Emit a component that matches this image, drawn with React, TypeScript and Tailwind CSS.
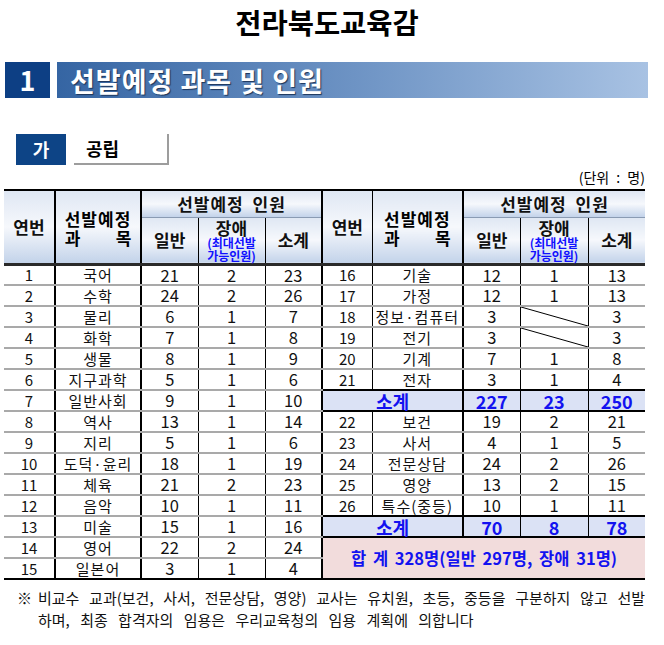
import React from "react";

const FONT = { fontFamily: '"Noto Sans CJK KR", "Noto Sans", sans-serif' };

const left: [number, string, number, number, number][] = [
  [1, "국어", 21, 2, 23],
  [2, "수학", 24, 2, 26],
  [3, "물리", 6, 1, 7],
  [4, "화학", 7, 1, 8],
  [5, "생물", 8, 1, 9],
  [6, "지구과학", 5, 1, 6],
  [7, "일반사회", 9, 1, 10],
  [8, "역사", 13, 1, 14],
  [9, "지리", 5, 1, 6],
  [10, "도덕·윤리", 18, 1, 19],
  [11, "체육", 21, 2, 23],
  [12, "음악", 10, 1, 11],
  [13, "미술", 15, 1, 16],
  [14, "영어", 22, 2, 24],
  [15, "일본어", 3, 1, 4],
];

type R =
  | { k: "row"; n: number; s: string; a: number; b: number | null; c: number }
  | { k: "sub"; a: number; b: number; c: number }
  | { k: "total" }
  | { k: "none" };

const right: R[] = [
  { k: "row", n: 16, s: "기술", a: 12, b: 1, c: 13 },
  { k: "row", n: 17, s: "가정", a: 12, b: 1, c: 13 },
  { k: "row", n: 18, s: "정보·컴퓨터", a: 3, b: null, c: 3 },
  { k: "row", n: 19, s: "전기", a: 3, b: null, c: 3 },
  { k: "row", n: 20, s: "기계", a: 7, b: 1, c: 8 },
  { k: "row", n: 21, s: "전자", a: 3, b: 1, c: 4 },
  { k: "sub", a: 227, b: 23, c: 250 },
  { k: "row", n: 22, s: "보건", a: 19, b: 2, c: 21 },
  { k: "row", n: 23, s: "사서", a: 4, b: 1, c: 5 },
  { k: "row", n: 24, s: "전문상담", a: 24, b: 2, c: 26 },
  { k: "row", n: 25, s: "영양", a: 13, b: 2, c: 15 },
  { k: "row", n: 26, s: "특수(중등)", a: 10, b: 1, c: 11 },
  { k: "sub", a: 70, b: 8, c: 78 },
  { k: "total" },
  { k: "none" },
];

const HG = "bg-linear-to-b from-[#dfe7f3] via-[#f6f8fc] to-[#c3d3ea]";

function Diag() {
  return (
    <svg className="absolute inset-0 h-full w-full" viewBox="0 0 100 100" preserveAspectRatio="none">
      <line x1="0" y1="0" x2="100" y2="100" stroke="#000" strokeWidth="1" vectorEffect="non-scaling-stroke" />
    </svg>
  );
}

function SubjectHead() {
  return (
    <th rowSpan={2} className={`${HG} border-b-[3px] border-b-[#2a2a2a] border-r-2 border-r-black p-0 align-middle`}>
      <div className="inline-flex flex-col text-[17px] font-bold leading-[19px] text-black">
        <span className="tracking-[1px]">선발예정</span>
        <span className="flex justify-between">
          <span>과</span>
          <span>목</span>
        </span>
      </div>
    </th>
  );
}

export default function App() {
  const gray = "border-b-2 border-b-[#a9a9a9]";
  const blk = "border-b-2 border-b-black";
  const cell = "p-0 text-center align-middle";
  const subCls = "bg-[#dbe2f5] text-[18px] font-bold leading-none text-[#1212f0]";
  return (
    <div className="relative h-[645px] w-[664px] overflow-hidden bg-white text-[#111]" style={FONT}>
      {/* title */}
      <div className="flex h-[44px] items-center justify-center pr-[10px]">
        <h1 className="text-[28.5px] font-bold leading-none text-black">전라북도교육감</h1>
      </div>
      {/* section bar */}
      <div className="mt-[18px] flex h-[36px] items-stretch pl-[5px] pr-[16px]">
        <div className="flex w-[45px] items-center justify-center bg-[#0d3f84] text-[27px] font-bold text-white">1</div>
        <div className="ml-[7px] flex flex-1 items-center bg-linear-to-r from-[#3565a3] via-[#6d93c4] to-[#a8c2e3] pl-[13px]">
          <span
            className="text-[27px] font-bold leading-none tracking-[1px] text-white"
            style={{ textShadow: "1px 1px 1px #1c3559" }}
          >
            선발예정 과목 및 인원
          </span>
        </div>
      </div>
      {/* 가 공립 */}
      <div className="mt-[36px] flex h-[31px] pl-[16px]">
        <div className="flex w-[50px] items-center justify-center bg-[#0d4486] text-[18px] font-bold text-white">가</div>
        <div className="ml-[8px] flex w-[95px] items-center border-b-2 border-r-2 border-[#9d9d9d] pl-[12px] text-[18px] font-bold text-black">
          공립
        </div>
      </div>
      {/* unit */}
      <div className="flex h-[24px] items-center justify-end pr-[19px] text-[14px] leading-none text-black [word-spacing:4px]">
        (단위 : 명)
      </div>

      {/* table */}
      <table className="ml-[4px] w-[641px] table-fixed border-collapse border-t-2 border-t-black">
        <colgroup>
          <col className="w-[51px]" />
          <col className="w-[86px]" />
          <col className="w-[57px]" />
          <col className="w-[67px]" />
          <col className="w-[57px]" />
          <col className="w-[50px]" />
          <col className="w-[91px]" />
          <col className="w-[57px]" />
          <col className="w-[68px]" />
          <col className="w-[57px]" />
        </colgroup>
        <thead>
          <tr className="h-[24px]">
            <th rowSpan={2} className={`${HG} ${cell} border-b-[3px] border-b-[#2a2a2a] border-r-2 border-r-black text-[17px] font-bold`}>
              연번
            </th>
            <SubjectHead />
            <th colSpan={3} className={`${HG} ${cell} border-b border-b-[#8a9bb3] border-r-2 border-r-black text-[17px] font-bold tracking-[1px] [word-spacing:4px]`}>
              선발예정 인원
            </th>
            <th rowSpan={2} className={`${HG} ${cell} border-b-[3px] border-b-[#2a2a2a] border-r border-r-black text-[17px] font-bold`}>
              연번
            </th>
            <SubjectHead />
            <th colSpan={3} className={`${HG} ${cell} border-b border-b-[#8a9bb3] text-[17px] font-bold tracking-[1px] [word-spacing:4px]`}>
              선발예정 인원
            </th>
          </tr>
          <tr className="h-[47px]">
            {[0, 1].map((g) => (
              <React.Fragment key={g}>
                <th className={`${HG} ${cell} border-b-[3px] border-b-[#2a2a2a] border-r border-r-black text-[17px] font-bold`}>일반</th>
                <th className={`${HG} ${cell} border-b-[3px] border-b-[#2a2a2a] border-r border-r-black`}>
                  <div className="flex flex-col items-center">
                    <span className="text-[17px] font-bold leading-[19px]">장애</span>
                    <span className="text-[12px] font-bold leading-[12px] text-[#1010ff]">(최대선발</span>
                    <span className="text-[12px] font-bold leading-[13px] text-[#1010ff]">가능인원)</span>
                  </div>
                </th>
                <th
                  className={`${HG} ${cell} border-b-[3px] border-b-[#2a2a2a] ${g === 0 ? "border-r-2 border-r-black" : ""} text-[17px] font-bold`}
                >
                  소계
                </th>
              </React.Fragment>
            ))}
          </tr>
        </thead>
        <tbody>
          {left.map((l, i) => {
            const lb = i === 14 ? blk : gray;
            const r = right[i];
            const rbNormal = i === 5 || i === 6 || i === 11 || i === 12 || i === 14 ? blk : gray;
            return (
              <tr key={i} className="h-[21px]">
                <td className={`${cell} ${lb} border-r-2 border-r-black text-[15px] leading-none`}>{l[0]}</td>
                <td className={`${cell} ${lb} border-r-2 border-r-black text-[15px] leading-none tracking-[1px]`}>{l[1]}</td>
                <td className={`${cell} ${lb} border-r border-r-black text-[16.5px] leading-none`}>{l[2]}</td>
                <td className={`${cell} ${lb} border-r border-r-black text-[16.5px] leading-none`}>{l[3]}</td>
                <td className={`${cell} ${lb} border-r-2 border-r-black text-[16.5px] leading-none`}>{l[4]}</td>
                {r.k === "row" && (
                  <>
                    <td className={`${cell} ${rbNormal} border-r border-r-black text-[15px] leading-none`}>{r.n}</td>
                    <td className={`${cell} ${rbNormal} border-r-2 border-r-black text-[15px] leading-none tracking-[1px]`}>{r.s}</td>
                    <td className={`${cell} ${rbNormal} border-r border-r-black text-[16.5px] leading-none`}>{r.a}</td>
                    <td className={`${cell} ${rbNormal} relative border-r border-r-black text-[16.5px] leading-none`}>
                      {r.b === null ? <Diag /> : r.b}
                    </td>
                    <td className={`${cell} ${rbNormal} text-[16.5px] leading-none`}>{r.c}</td>
                  </>
                )}
                {r.k === "sub" && (
                  <>
                    <td colSpan={2} className={`${cell} ${blk} border-r-2 border-r-black ${subCls}`}>
                      소계
                    </td>
                    <td className={`${cell} ${blk} border-r border-r-black ${subCls}`}>{r.a}</td>
                    <td className={`${cell} ${blk} border-r border-r-black ${subCls}`}>{r.b}</td>
                    <td className={`${cell} ${blk} ${subCls}`}>{r.c}</td>
                  </>
                )}
                {r.k === "total" && (
                  <td
                    colSpan={5}
                    rowSpan={2}
                    className={`${cell} ${blk} bg-[#f2dcdc] text-[16.5px] font-bold text-[#1212f0] [word-spacing:3px]`}
                  >
                    합 계 328명(일반 297명, 장애 31명)
                  </td>
                )}
              </tr>
            );
          })}
        </tbody>
      </table>

      {/* footnote */}
      <div className="mt-[7px] flex pl-[17px] pr-[19px] text-[15px] leading-[22px] text-[#111]">
        <span className="w-[21px] shrink-0">※</span>
        <div className="flex-1">
          <div className="[text-align-last:justify] text-justify">
            비교수 교과(보건, 사서, 전문상담, 영양) 교사는 유치원, 초등, 중등을 구분하지 않고 선발
          </div>
          <div className="[word-spacing:7px]">하며, 최종 합격자의 임용은 우리교육청의 임용 계획에 의합니다</div>
        </div>
      </div>
    </div>
  );
}
